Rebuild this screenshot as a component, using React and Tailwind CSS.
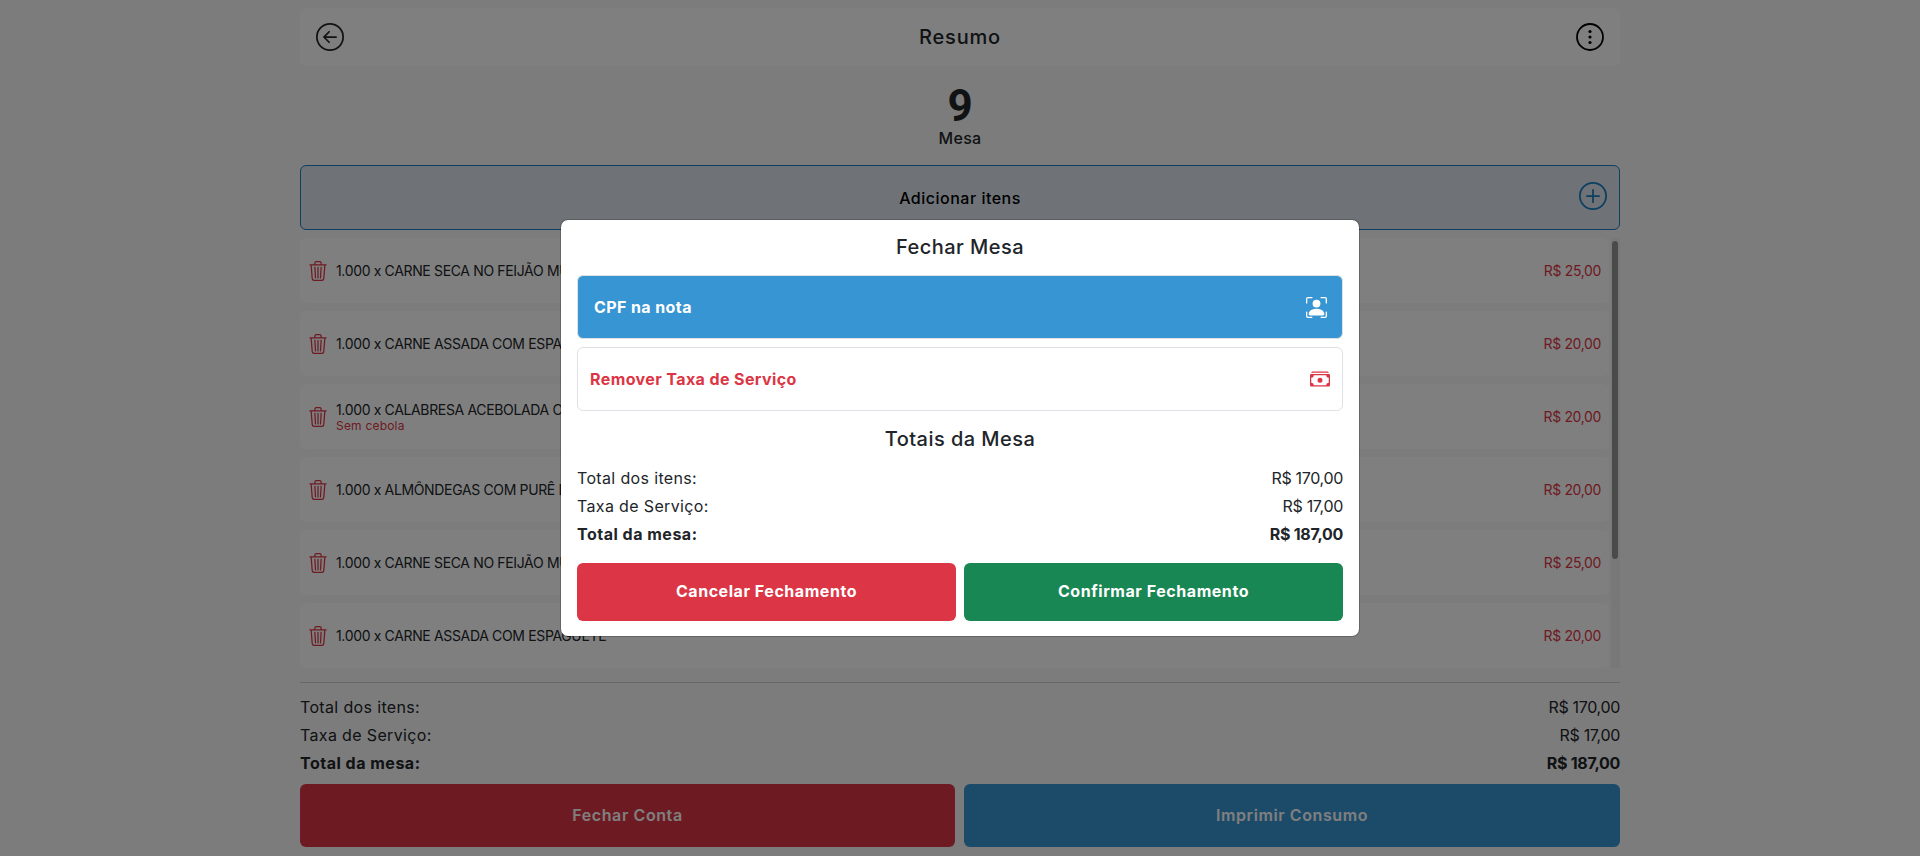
import React from "react";
import { BsArrowLeftCircle, BsPlusCircle, BsTrash3, BsPersonBoundingBox, BsCashStack } from "react-icons/bs";

const items = [
  { name: "1.000 x CARNE SECA NO FEIJÃO MUCUNGO", price: "R$ 25,00" },
  { name: "1.000 x CARNE ASSADA COM ESPAGUETE", price: "R$ 20,00" },
  { name: "1.000 x CALABRESA ACEBOLADA COM ARROZ", note: "Sem cebola", price: "R$ 20,00" },
  { name: "1.000 x ALMÔNDEGAS COM PURÊ DE BATATA", price: "R$ 20,00" },
  { name: "1.000 x CARNE SECA NO FEIJÃO MUCUNGO", price: "R$ 25,00" },
  { name: "1.000 x CARNE ASSADA COM ESPAGUETE", price: "R$ 20,00" },
];

function Totals() {
  return (
    <div className="text-[16px] leading-[28px] text-[#212529]">
      <div className="flex justify-between">
        <span className="tracking-[0.35px]">Total dos itens:</span>
        <span className="tracking-[-0.33px]">R$ 170,00</span>
      </div>
      <div className="flex justify-between">
        <span className="tracking-[0.35px]">Taxa de Serviço:</span>
        <span className="tracking-[-0.33px]">R$ 17,00</span>
      </div>
      <div className="flex justify-between font-bold">
        <span className="tracking-[0.5px]">Total da mesa:</span>
        <span className="tracking-[-0.3px]">R$ 187,00</span>
      </div>
    </div>
  );
}

function DotsIcon() {
  return (
    <svg width="28" height="28" viewBox="0 0 28 28" fill="none">
      <circle cx="14" cy="14" r="13" stroke="#000" strokeWidth="1.8" />
      <circle cx="14" cy="8.5" r="1.6" fill="#000" />
      <circle cx="14" cy="14" r="1.6" fill="#000" />
      <circle cx="14" cy="19.5" r="1.6" fill="#000" />
    </svg>
  );
}

export default function App() {
  return (
    <div
      className="relative h-[856px] overflow-hidden bg-[#f8f8f8] text-[#212529]"
      style={{ fontFamily: "Inter, 'Open Sans', sans-serif" }}
    >
      <div className="mx-auto flex w-[1320px] flex-col pt-[8px]">
        {/* header */}
        <div className="flex h-[58px] items-center justify-between rounded-md bg-white pl-4 pr-4 pb-[1px]">
          <BsArrowLeftCircle size={28} />
          <h1 className="text-[20px] font-medium tracking-[0.8px]">Resumo</h1>
          <DotsIcon />
        </div>

        <div className="mt-[22px] flex flex-col items-center">
          <span className="font-['Roboto'] text-[44px] font-bold leading-[36px]">9</span>
          <span className="mt-[2px] text-[16px] font-medium leading-[24px] tracking-[0.35px]">Mesa</span>
        </div>

        <button className="relative mt-[15px] flex h-[65px] items-center justify-center rounded-md border border-[#1a7ec0] bg-[#dee6f0] text-[16px] font-medium tracking-[0.5px] text-black">
          Adicionar itens
          <BsPlusCircle size={28} className="absolute right-[12px] top-[16px] text-[#1a7ec0]" />
        </button>

        {/* list */}
        <div className="mt-[8px] flex h-[430px] gap-[2px] overflow-hidden">
          <div className="flex flex-1 flex-col gap-[8px]">
            {items.map((item, i) => (
              <div key={i} className="flex h-[65px] shrink-0 items-center justify-between rounded-md bg-white pl-[8px] pr-[8px]">
                <div className="flex items-center gap-[8px]">
                  <BsTrash3 size={20} className="text-[#dc3545]" />
                  <div className="flex flex-col">
                    <span className="text-[14px] leading-[17px] tracking-[-0.35px] text-[#212529]">{item.name}</span>
                    {item.note && <span className="text-[12px] leading-[15px] tracking-[0.2px] text-[#dc3545]">{item.note}</span>}
                  </div>
                </div>
                <span className="text-[14px] tracking-[-0.35px] text-[#dc3545]">{item.price}</span>
              </div>
            ))}
          </div>
          <div className="w-[9px] bg-[#f1f1f1] px-[1px] pt-[3px]">
            <div className="h-[318px] w-[6px] rounded-full bg-[#949494]" />
          </div>
        </div>

        <hr className="mt-[14px] border-t border-[#cfcfcf]" />

        <div className="mt-[10px]">
          <Totals />
        </div>

        <div className="mt-[7px] grid grid-cols-[655px_1fr] gap-[9px]">
          <button className="h-[63px] rounded-md bg-[#dc3545] pb-[2px] text-[16px] font-semibold tracking-[0.6px] text-white">Fechar Conta</button>
          <button className="h-[63px] rounded-md bg-[#3895d3] pb-[2px] text-[16px] font-semibold tracking-[0.6px] text-white">Imprimir Consumo</button>
        </div>
      </div>

      {/* backdrop + modal */}
      <div className="absolute inset-0 bg-black/50" />
      <div className="absolute left-[560px] top-[219px] flex h-[418px] w-[800px] flex-col rounded-lg border border-black/20 bg-white bg-clip-padding px-[16px] pt-[13px]">
        <h2 className="text-center text-[20px] font-medium leading-[28px] tracking-[0.45px]">Fechar Mesa</h2>

        <div className="mt-[14px] flex h-[64px] items-center justify-between rounded-md border border-[#dee2e6] bg-[#3895d3] pl-4 pr-[15px] text-[16px] font-bold tracking-[0.4px] text-white">
          CPF na nota
          <BsPersonBoundingBox size={21} />
        </div>
        <div className="mt-[8px] flex h-[64px] items-center justify-between rounded-md border border-[#dee2e6] bg-white pl-[12px] pr-[12px] text-[16px] font-bold tracking-[0.4px] text-[#dc3545]">
          Remover Taxa de Serviço
          <BsCashStack size={20} />
        </div>

        <h2 className="mt-[14px] text-center text-[20px] font-medium leading-[28px] tracking-[0.45px]">Totais da Mesa</h2>

        <div className="mt-[11px]">
          <Totals />
        </div>

        <div className="mt-[15px] grid grid-cols-2 gap-[8px]">
          <button className="h-[58px] rounded-md bg-[#dc3545] pb-[2px] text-[16px] font-bold tracking-[0.55px] text-white">Cancelar Fechamento</button>
          <button className="h-[58px] rounded-md bg-[#198754] pb-[2px] text-[16px] font-bold tracking-[0.55px] text-white">Confirmar Fechamento</button>
        </div>
      </div>
    </div>
  );
}
